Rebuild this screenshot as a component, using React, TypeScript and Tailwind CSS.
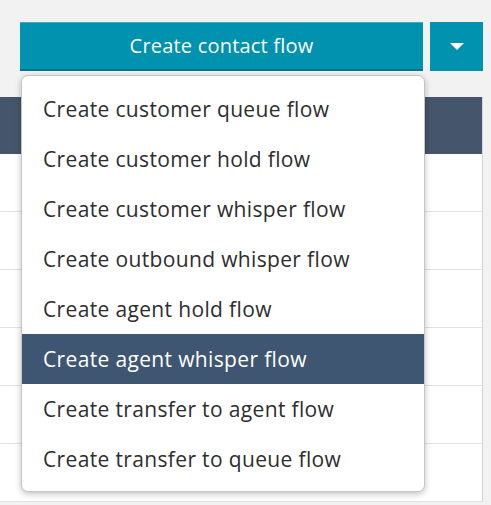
import React from "react";

const items = [
  "Create customer queue flow",
  "Create customer hold flow",
  "Create customer whisper flow",
  "Create outbound whisper flow",
  "Create agent hold flow",
  "Create agent whisper flow",
  "Create transfer to agent flow",
  "Create transfer to queue flow",
];

export default function App() {
  return (
    <div
      className="relative w-[491px] h-[505px] overflow-hidden bg-[#f2f2f2]"
      style={{ fontFamily: '"Open Sans", "Noto Sans", sans-serif' }}
    >
      <div className="h-[97px] pt-[22px] pl-[20px] flex gap-[7px]">
        <button className="w-[403px] h-[49px] bg-[#0092ae] border-t border-t-[#3fa9be] border-b-2 border-b-[#00778f] text-white text-[20px] tracking-[0.2px] flex items-center justify-center">
          Create contact flow
        </button>
        <button className="w-[53px] h-[49px] bg-[#0092ae] flex items-center justify-center">
          <svg width="14" height="8" viewBox="0 0 14 8">
            <path d="M0 0 L14 0 L7 7 Z" fill="white" />
          </svg>
        </button>
      </div>
      <div className="w-[483px] bg-white border-r border-[#d5d5d5]">
        <div className="h-[57px] bg-[#45556b]" />
        {[0, 1, 2, 3, 4, 5].map((i) => (
          <div key={i} className="h-[58px] border-b border-[#e2e2e2]" />
        ))}
      </div>
      <div className="absolute left-[21px] top-[75px] w-[404px] h-[417px] bg-white border border-[#c6c6c6] rounded-[7px] shadow-[0_2px_6px_rgba(0,0,0,0.25)] pt-[8px] overflow-hidden">
        {items.map((t, i) => (
          <div
            key={t}
            className={
              "h-[50px] flex items-center pl-[21px] pt-[2px] text-[21px] tracking-[0.35px] " +
              (i === 5 ? "bg-[#3f5672] text-white" : "text-[#2e2e2e]")
            }
          >
            {t}
          </div>
        ))}
      </div>
    </div>
  );
}
